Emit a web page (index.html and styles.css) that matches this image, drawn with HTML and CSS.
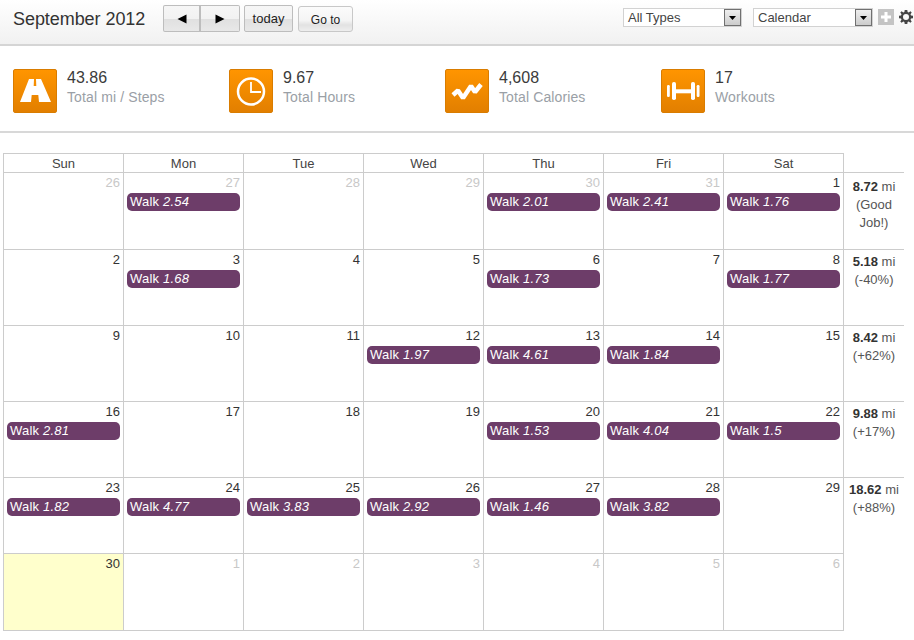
FILE: index.html
```html
<!DOCTYPE html>
<html lang="en">
<head>
<meta charset="utf-8">
<title>Calendar</title>
<link rel="stylesheet" href="styles.css">
</head>
<body>
<header class="toolbar">
  <h1 class="month">September 2012</h1>
  <div class="btn-group">
    <button class="btn btn-arrow"><svg width="10" height="10" viewBox="0 0 10 10"><path d="M0.500 5 9.500 0.500V9.500Z"/></svg></button>
    <button class="btn btn-arrow"><svg width="10" height="10" viewBox="0 0 10 10"><path d="M9.500 5 0.500 0.500V9.500Z"/></svg></button>
  </div>
  <button class="btn btn-today">today</button>
  <button class="btn btn-goto">Go to</button>
  <div class="spacer"></div>
  <div class="select sel-types"><span>All Types</span><i class="sel-arrow"><svg width="7" height="4" viewBox="0 0 7 4"><path d="M0 0H7L3.500 4Z"/></svg></i></div>
  <div class="select sel-cal"><span>Calendar</span><i class="sel-arrow"><svg width="7" height="4" viewBox="0 0 7 4"><path d="M0 0H7L3.500 4Z"/></svg></i></div>
  <div class="plus"><svg width="16" height="16" viewBox="0 0 16 16"><path d="M6.500 3h3v3.500H13v3H9.500V13h-3V9.500H3v-3h3.500Z" fill="#fff"/></svg></div>
  <svg class="gear" width="14" height="14" viewBox="0 0 14 14"><path fill-rule="evenodd" fill="#444" d="M5.700 0h2.600l.3 2 1.100.5L11.400 1.300l1.300 1.300-1.200 1.700.5 1.100 2 .3v2.600l-2 .3-.5 1.100 1.200 1.700-1.300 1.300-1.700-1.200-1.100.5-.3 2H5.700l-.3-2-1.100-.5-1.700 1.200-1.300-1.300 1.200-1.700-.5-1.100-2-.3V5.700l2-.3.500-1.100L1.300 2.600l1.300-1.300 1.700 1.200 1.100-.5ZM7 4a3 3 0 1 0 0 6 3 3 0 0 0 0-6Z"/></svg>
</header>

<section class="stats">
  <div class="stat">
    <div class="stat-icon"><svg width="44" height="44" viewBox="0 0 44 44"><path fill="#fff" d="M16 10h5l-.3 7h2.600l-.3-7h5l10 23H26l-.7-7h-6.600l-.7 7H7Z"/></svg></div>
    <div class="stat-text"><div class="stat-value">43.86</div><div class="stat-label">Total mi / Steps</div></div>
  </div>
  <div class="stat">
    <div class="stat-icon"><svg width="44" height="44" viewBox="0 0 44 44"><circle cx="22" cy="22.500" r="13" fill="none" stroke="#fff" stroke-width="2.500"/><path d="M22 13v10h10" fill="none" stroke="#fff" stroke-width="1.800"/></svg></div>
    <div class="stat-text"><div class="stat-value">9.67</div><div class="stat-label">Total Hours</div></div>
  </div>
  <div class="stat">
    <div class="stat-icon"><svg width="44" height="44" viewBox="0 0 44 44"><path d="M8 26l5-4.500 5 7.500 8-12 4 6 6-7.500" fill="none" stroke="#fff" stroke-width="4.500" stroke-linejoin="bevel"/></svg></div>
    <div class="stat-text"><div class="stat-value">4,608</div><div class="stat-label">Total Calories</div></div>
  </div>
  <div class="stat">
    <div class="stat-icon"><svg width="44" height="44" viewBox="0 0 44 44"><g fill="#fff"><rect x="6" y="16" width="2.800" height="12" rx="1.200"/><rect x="11" y="13" width="4" height="18" rx="1.800"/><rect x="15" y="20.300" width="15" height="4"/><rect x="30" y="13" width="4" height="18" rx="1.800"/><rect x="35.700" y="16" width="2.800" height="12" rx="1.200"/></g></svg></div>
    <div class="stat-text"><div class="stat-value">17</div><div class="stat-label">Workouts</div></div>
  </div>
</section>

<main class="cal-wrap">
  <div class="cal">
    <div class="dow">Sun</div><div class="dow">Mon</div><div class="dow">Tue</div><div class="dow">Wed</div><div class="dow">Thu</div><div class="dow">Fri</div><div class="dow">Sat</div>
    <div class="sum-head"></div>

    <div class="day off"><b>26</b></div>
    <div class="day off"><b>27</b><a class="ev">Walk <em>2.54</em></a></div>
    <div class="day off"><b>28</b></div>
    <div class="day off"><b>29</b></div>
    <div class="day off"><b>30</b><a class="ev">Walk <em>2.01</em></a></div>
    <div class="day off"><b>31</b><a class="ev">Walk <em>2.41</em></a></div>
    <div class="day"><b>1</b><a class="ev">Walk <em>1.76</em></a></div>
    <div class="sum sum-first"><strong>8.72</strong> mi<br>(Good<br>Job!)</div>

    <div class="day"><b>2</b></div>
    <div class="day"><b>3</b><a class="ev">Walk <em>1.68</em></a></div>
    <div class="day"><b>4</b></div>
    <div class="day"><b>5</b></div>
    <div class="day"><b>6</b><a class="ev">Walk <em>1.73</em></a></div>
    <div class="day"><b>7</b></div>
    <div class="day"><b>8</b><a class="ev">Walk <em>1.77</em></a></div>
    <div class="sum"><strong>5.18</strong> mi<br>(-40%)</div>

    <div class="day"><b>9</b></div>
    <div class="day"><b>10</b></div>
    <div class="day"><b>11</b></div>
    <div class="day"><b>12</b><a class="ev">Walk <em>1.97</em></a></div>
    <div class="day"><b>13</b><a class="ev">Walk <em>4.61</em></a></div>
    <div class="day"><b>14</b><a class="ev">Walk <em>1.84</em></a></div>
    <div class="day"><b>15</b></div>
    <div class="sum"><strong>8.42</strong> mi<br>(+62%)</div>

    <div class="day"><b>16</b><a class="ev">Walk <em>2.81</em></a></div>
    <div class="day"><b>17</b></div>
    <div class="day"><b>18</b></div>
    <div class="day"><b>19</b></div>
    <div class="day"><b>20</b><a class="ev">Walk <em>1.53</em></a></div>
    <div class="day"><b>21</b><a class="ev">Walk <em>4.04</em></a></div>
    <div class="day"><b>22</b><a class="ev">Walk <em>1.5</em></a></div>
    <div class="sum"><strong>9.88</strong> mi<br>(+17%)</div>

    <div class="day"><b>23</b><a class="ev">Walk <em>1.82</em></a></div>
    <div class="day"><b>24</b><a class="ev">Walk <em>4.77</em></a></div>
    <div class="day"><b>25</b><a class="ev">Walk <em>3.83</em></a></div>
    <div class="day"><b>26</b><a class="ev">Walk <em>2.92</em></a></div>
    <div class="day"><b>27</b><a class="ev">Walk <em>1.46</em></a></div>
    <div class="day"><b>28</b><a class="ev">Walk <em>3.82</em></a></div>
    <div class="day"><b>29</b></div>
    <div class="sum sum-last"><strong>18.62</strong> mi<br>(+88%)</div>

    <div class="day today"><b>30</b></div>
    <div class="day off"><b>1</b></div>
    <div class="day off"><b>2</b></div>
    <div class="day off"><b>3</b></div>
    <div class="day off"><b>4</b></div>
    <div class="day off"><b>5</b></div>
    <div class="day off"><b>6</b></div>
    <div class="sum-empty"></div>
  </div>
</main>
</body>
</html>
```
FILE: styles.css
```css
* { box-sizing: border-box; }
html, body { margin: 0; padding: 0; }
body { width: 914px; height: 640px; overflow: hidden; background: #fff; font-family: "Liberation Sans", Arial, sans-serif; color: #333; }

.toolbar { height: 46px; display: flex; align-items: flex-start; padding: 5px 0 0 13px; background: linear-gradient(#fff, #f1f1f1); border-bottom: 2px solid #d5d5d5; }
.month { margin: 4px 18px 0 0; font-size: 18px; line-height: 20px; font-weight: normal; color: #333; width: 132px; white-space: nowrap; letter-spacing: -0.06px; }
.btn { font-family: inherit; padding: 0; margin: 0; border: 1px solid #bdbdbd; border-radius: 2px; background: linear-gradient(#f6f6f6 0, #f2f2f2 50%, #e0e0e0 52%, #e8e8e8 100%); color: #222; font-size: 13px; height: 27px; display: flex; align-items: center; justify-content: center; }
.btn svg { display: block; fill: #000; }
.btn-group { display: flex; margin-right: 4px; }
.btn-arrow { width: 38px; }
.btn-arrow:first-child { border-right-width: 2px; border-radius: 2px 0 0 2px; }
.btn-arrow:last-child { width: 39px; border-left: 0; border-radius: 0 2px 2px 0; }
.btn-today { width: 49px; margin-right: 5px; }
.btn-goto { width: 55px; height: 26px; margin-top: 1px; padding-top: 2px; font-size: 12px; border-color: #c8c8c8; border-radius: 3px; background: linear-gradient(#fbfbfb 0, #f5f5f5 55%, #e2e2e2 75%, #eee 100%); }
.spacer { flex: 1; }
.select { height: 19px; margin-top: 3px; border: 1px solid #d2d2d2; background: #fff; font-size: 13px; line-height: 17px; padding-left: 4px; display: flex; justify-content: space-between; color: #444; }
.sel-types { width: 119px; margin-right: 11px; }
.sel-cal { width: 120px; margin-right: 5px; }
.sel-arrow { width: 17px; height: 17px; border: 1px solid #707070; background: linear-gradient(#eee, #ccc); display: flex; align-items: center; justify-content: center; }
.sel-arrow svg { display: block; }
.plus { width: 16px; height: 16px; margin-top: 4px; margin-right: 5px; background: #c4c4c4; }
.plus svg { display: block; }
.gear { margin: 5px 1px 0 0; }

.stats { height: 87px; display: flex; padding: 23px 0 0 13px; border-bottom: 2px solid #d8d8d8; }
.stat { width: 216px; display: flex; }
.stat-icon { width: 44px; height: 44px; border-radius: 2px; background: linear-gradient(#ff9500, #e27f00); border: 1px solid #d97c00; margin-right: 10px; }
.stat-icon svg { display: block; margin: -1px; }
.stat-text { margin-top: -1px; }
.stat-value { font-size: 16px; line-height: 20px; color: #3b3b3b; }
.stat-label { font-size: 14px; line-height: 18px; color: #9aa0a6; letter-spacing: 0.12px; }

.cal-wrap { padding: 20px 0 0 3px; }
.cal { display: grid; grid-template-columns: 121px repeat(6, 120px) 60px; grid-template-rows: 20px 77px repeat(4, 76px) 77px; font-size: 13px; }
.dow { border: 1px solid #ccc; border-left: 0; font-size: 13px; line-height: 19px; text-align: center; color: #444; }
.dow:first-child, .day:nth-child(8n+1) { border-left: 1px solid #ccc; }
.sum-head { border-bottom: 1px solid #ccc; }
.day { border-right: 1px solid #ccc; border-bottom: 1px solid #ccc; padding: 0 3px; }
.day b { display: block; font-weight: normal; text-align: right; font-size: 13px; line-height: 20px; color: #333; }
.day.off b { color: #c8c8c8; }
.today { background: #ffc; }
.ev { display: block; height: 18px; border-radius: 5px; background: #6d3d69; color: #fff; font-size: 13px; line-height: 18px; padding-left: 3px; letter-spacing: 0.2px; white-space: nowrap; }
.ev em { font-style: italic; }
.sum { border-bottom: 1px solid #ccc; text-align: center; font-size: 13px; line-height: 18px; color: #555; padding-top: 3px; }
.sum-first { padding-top: 5px; }
.sum-last { border-bottom: 0; }
.sum strong { color: #333; font-weight: bold; }
```
